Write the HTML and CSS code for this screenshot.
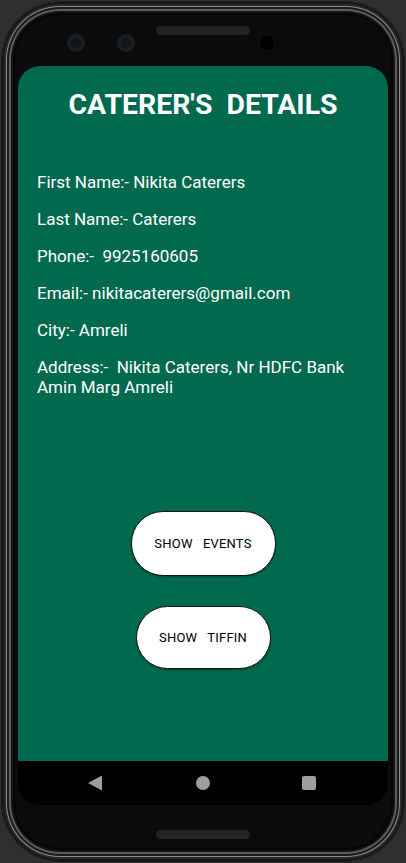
FILE: index.html
```html
<!DOCTYPE html>
<html>
<head>
<meta charset="utf-8">
<link rel="stylesheet" href="styles.css">
</head>
<body>
<div class="phone">
  <svg class="bezel-top" width="402" height="64" viewBox="0 0 402 64">
    <rect x="154" y="24" width="94" height="9" rx="4.5" fill="#232323"/>
    <circle cx="74" cy="41" r="9" fill="#1a1f24"/>
    <circle cx="74" cy="41" r="5" fill="#10151a"/>
    <circle cx="124" cy="41" r="9" fill="#1a1f24"/>
    <circle cx="124" cy="41" r="5" fill="#10151a"/>
    <circle cx="265" cy="41" r="7" fill="#000"/>
  </svg>
  <div class="screen">
    <div class="content">
      <h1 class="title">CATERER'S&nbsp; DETAILS</h1>
      <div class="details">
        <p class="row">First Name:- Nikita Caterers</p>
        <p class="row">Last Name:- Caterers</p>
        <p class="row">Phone:-&nbsp; 9925160605</p>
        <p class="row">Email:- nikitacaterers@gmail.com</p>
        <p class="row">City:- Amreli</p>
        <p class="row">Address:-&nbsp; Nikita Caterers, Nr HDFC Bank Amin Marg Amreli</p>
      </div>
      <div class="actions">
        <button class="btn btn-events">SHOW&nbsp;&nbsp; EVENTS</button>
        <button class="btn btn-tiffin">SHOW&nbsp;&nbsp; TIFFIN</button>
      </div>
    </div>
    <div class="navbar">
      <svg width="370" height="44" viewBox="0 0 370 44">
        <polygon points="70,22 84,14.5 84,29.5" fill="#9e9e9e"/>
        <circle cx="185" cy="22" r="7" fill="#9e9e9e"/>
        <rect x="284" y="15" width="14" height="14" rx="2" fill="#9e9e9e"/>
      </svg>
    </div>
  </div>
  <svg class="bezel-bottom" width="402" height="56" viewBox="0 0 402 56">
    <rect x="154" y="25" width="94" height="9" rx="4.5" fill="#232323"/>
  </svg>
</div>
</body>
</html>
```
FILE: styles.css
```css
html, body {
  margin: 0;
  padding: 0;
}
body {
  background: #2e2f31;
  width: 406px;
  height: 863px;
  overflow: hidden;
  font-family: Roboto, "Liberation Sans", sans-serif;
}
.phone {
  margin: 2px;
  width: 402px;
  height: 859px;
  box-sizing: border-box;
  border-radius: 58px;
  background: #0b0b0b;
  display: flex;
  flex-direction: column;
  box-shadow:
    inset 0 0 0 2px #161616,
    inset 0 0 0 4px #2a2a2a,
    inset 0 0 0 5px #8a8a8a,
    inset 0 0 0 7px #1c1c1c,
    inset 0 0 0 9px #5c5c5c,
    inset 0 0 0 11px #141414,
    inset 0 0 0 13px #050505,
    0 0 0 1px #1b1b1b;
}
.bezel-top, .bezel-bottom {
  display: block;
  flex: none;
}
.screen {
  margin: 0 16px;
  width: 370px;
  height: 739px;
  flex: none;
  border-radius: 22px;
  overflow: hidden;
  background: #000;
  display: flex;
  flex-direction: column;
}
.content {
  flex: 1;
  background: #01694e;
  color: #fff;
  padding-top: 23px;
  display: flex;
  flex-direction: column;
}
.title {
  margin: 0;
  font-size: 28.4px;
  line-height: 32px;
  font-weight: 700;
  text-align: center;
  color: #fff;
}
.details {
  margin-top: 51px;
  padding: 0 19px;
  display: flex;
  flex-direction: column;
  gap: 17px;
}
.row {
  margin: 0;
  font-size: 17px;
  line-height: 20px;
}
.actions {
  margin-top: 114px;
  display: flex;
  flex-direction: column;
  align-items: center;
  gap: 30px;
}
.btn {
  background: #fff;
  border: 1px solid #111;
  border-radius: 32px;
  color: #000;
  font-family: Roboto, "Liberation Sans", sans-serif;
  font-size: 13px;
  font-weight: 400;
  letter-spacing: 0.2px;
  white-space: pre;
  padding: 0;
  box-shadow: 0 1px 2px rgba(0,0,0,0.35);
}
.btn-events {
  width: 145px;
  height: 65px;
}
.btn-tiffin {
  width: 135px;
  height: 63px;
}
.navbar {
  height: 44px;
  flex: none;
  background: #000;
}
.navbar svg {
  display: block;
}
```
